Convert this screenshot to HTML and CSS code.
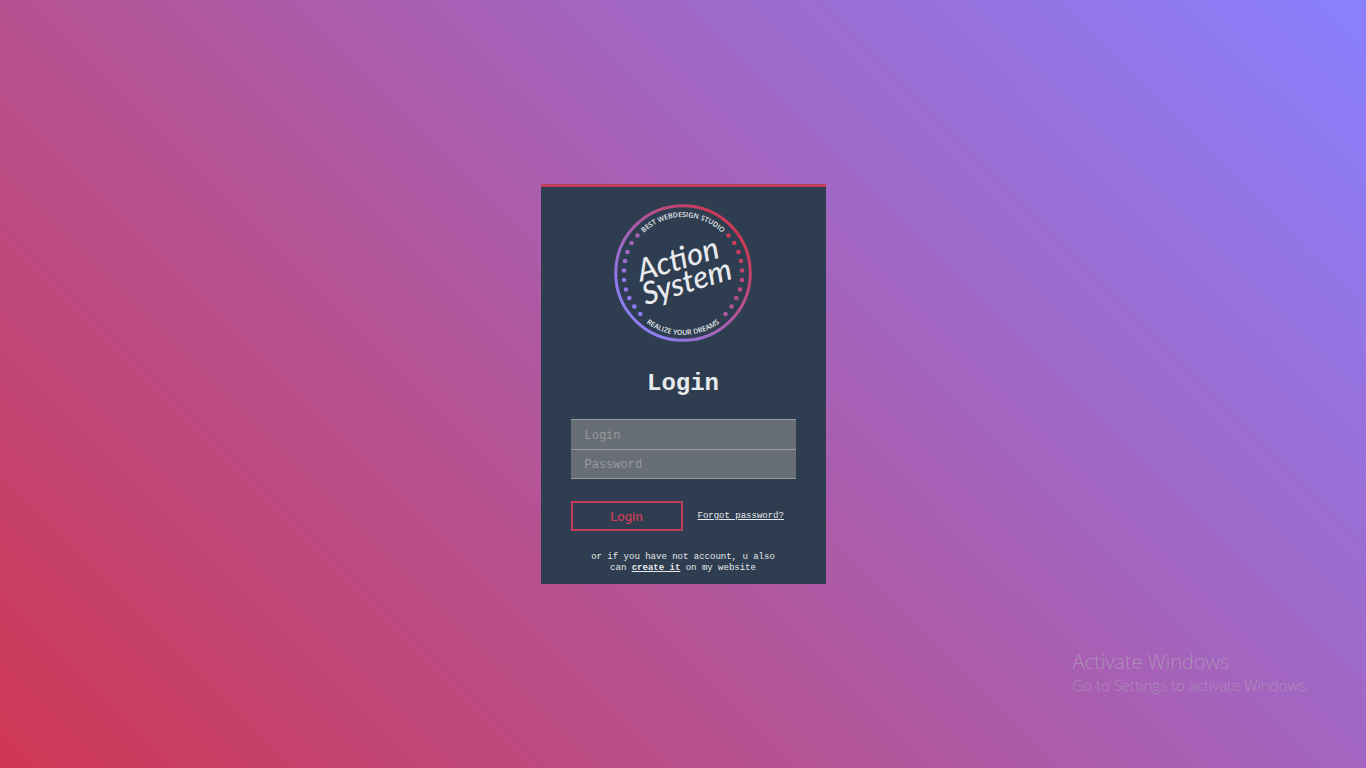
FILE: index.html
```html
<!DOCTYPE html>
<html lang="en">
<head>
  <meta charset="utf-8">
  <meta name="viewport" content="width=device-width, initial-scale=1">
  <title>Action System - Login</title>
  <link rel="stylesheet" href="styles.css">
</head>
<body>
  <main class="card">
    <svg class="logo" viewBox="0 0 138 138" role="img" aria-label="Action System">
      <defs>
        <linearGradient id="ring" gradientUnits="userSpaceOnUse" x1="32" y1="118" x2="120" y2="34">
          <stop offset="0" stop-color="#8c7cf0"/>
          <stop offset="1" stop-color="#cc3a58"/>
        </linearGradient>
        <path id="arc-top" d="M13 69a56 56 0 0 1 112 0"/>
        <path id="arc-bottom" d="M7 69a62 62 0 0 0 124 0"/>
      </defs>
      <circle cx="69" cy="69" r="67.3" fill="none" stroke="url(#ring)" stroke-width="3"/>
      <g fill="url(#ring)">
        <circle cx="23.5" cy="31.5" r="2.3"/><circle cx="17.5" cy="39" r="2.3"/><circle cx="13.5" cy="48" r="2.3"/>
        <circle cx="11" cy="57" r="2.3"/><circle cx="10" cy="66.5" r="2.3"/><circle cx="10" cy="76" r="2.3"/>
        <circle cx="12" cy="85.5" r="2.3"/><circle cx="15.3" cy="94" r="2.3"/><circle cx="20.3" cy="102.5" r="2.3"/><circle cx="26.3" cy="110" r="2.3"/>
        <circle cx="114.5" cy="31.5" r="2.3"/><circle cx="120.3" cy="39" r="2.3"/><circle cx="124.5" cy="48" r="2.3"/>
        <circle cx="127" cy="57" r="2.3"/><circle cx="128" cy="66.5" r="2.3"/><circle cx="128" cy="76" r="2.3"/>
        <circle cx="126" cy="85.5" r="2.3"/><circle cx="122.3" cy="94" r="2.3"/><circle cx="117.5" cy="102.5" r="2.3"/><circle cx="111.5" cy="110" r="2.3"/>
      </g>
      <text class="logo-motto"><textPath href="#arc-top" startOffset="50%">BEST WEBDESIGN STUDIO</textPath></text>
      <text class="logo-motto"><textPath href="#arc-bottom" startOffset="50%">REALIZE YOUR DREAMS</textPath></text>
      <g class="logo-name" transform="rotate(-17 69 69)">
        <text x="68" y="65">Action</text>
        <text x="70" y="89">System</text>
      </g>
    </svg>

    <h1 class="title">Login</h1>

    <form class="form">
      <div class="fields">
        <input class="field" type="text" placeholder="Login" aria-label="Login">
        <input class="field" type="password" placeholder="Password" aria-label="Password">
      </div>
      <div class="actions">
        <button class="submit" type="submit">Login</button>
        <a class="link" href="#">Forgot password?</a>
      </div>
    </form>

    <p class="note">or if you have not account, u also can <a class="link link-strong" href="#">create it</a> on my website</p>
  </main>

  <aside class="watermark">
    <p class="watermark-title">Activate Windows</p>
    <p class="watermark-text">Go to Settings to activate Windows.</p>
  </aside>
</body>
</html>
```
FILE: styles.css
```css
* {
  box-sizing: border-box;
}

body {
  display: flex;
  align-items: center;
  justify-content: center;
  min-height: 100vh;
  margin: 0;
  background: linear-gradient(45deg, #cf3753, #8980ff);
  color: #e8eaed;
  font-family: "Liberation Mono", "Courier New", monospace;
}

.card {
  display: flex;
  flex-direction: column;
  width: 100%;
  max-width: 285px;
  padding: 17px 30px 10px;
  border-top: 3px solid #c2405a;
  background: #2e3d50;
}

.logo {
  align-self: center;
  width: 138px;
  height: 138px;
}

.logo-motto {
  fill: #e8eaed;
  font: 600 7px "Open Sans", "Noto Sans", sans-serif;
  text-anchor: middle;
}

.logo-name {
  fill: #e8eaed;
  font: italic 500 31px Lato, sans-serif;
  text-anchor: middle;
}

.title {
  margin: 26px 0 20px;
  font-size: 24px;
  line-height: 31px;
  text-align: center;
}

.fields {
  display: flex;
  flex-direction: column;
}

.field {
  width: 100%;
  height: 30px;
  padding: 2px 14px 0;
  border: 0;
  border-top: 1px solid #979b9f;
  border-radius: 0;
  background: #676e76;
  color: #e8eaed;
  font: 12px "Liberation Mono", "Courier New", monospace;
}

.field:last-child {
  border-bottom: 1px solid #979b9f;
}

.field::placeholder {
  color: #989b9e;
  opacity: 1;
}

.actions {
  display: flex;
  align-items: center;
  gap: 15px;
  margin-top: 22px;
}

.submit {
  width: 112px;
  height: 30px;
  padding: 0;
  border: 2px solid #c33d58;
  background: transparent;
  color: #c33d58;
  font: 500 13px Roboto, sans-serif;
}

.link {
  color: inherit;
  font-size: 9px;
}

.link-strong {
  font-weight: 700;
}

.note {
  margin: 21px 0 0;
  padding: 0 18px;
  font-size: 9px;
  line-height: 11px;
  text-align: center;
}

.watermark {
  position: fixed;
  right: 57px;
  bottom: 72px;
  color: #ad8fb6;
  font-family: "Open Sans", "Noto Sans", sans-serif;
  font-weight: 300;
}

.watermark p {
  margin: 0;
}

.watermark-title {
  font-size: 20px;
  line-height: 24px;
}

.watermark-text {
  font-size: 15px;
  line-height: 22px;
}
```
